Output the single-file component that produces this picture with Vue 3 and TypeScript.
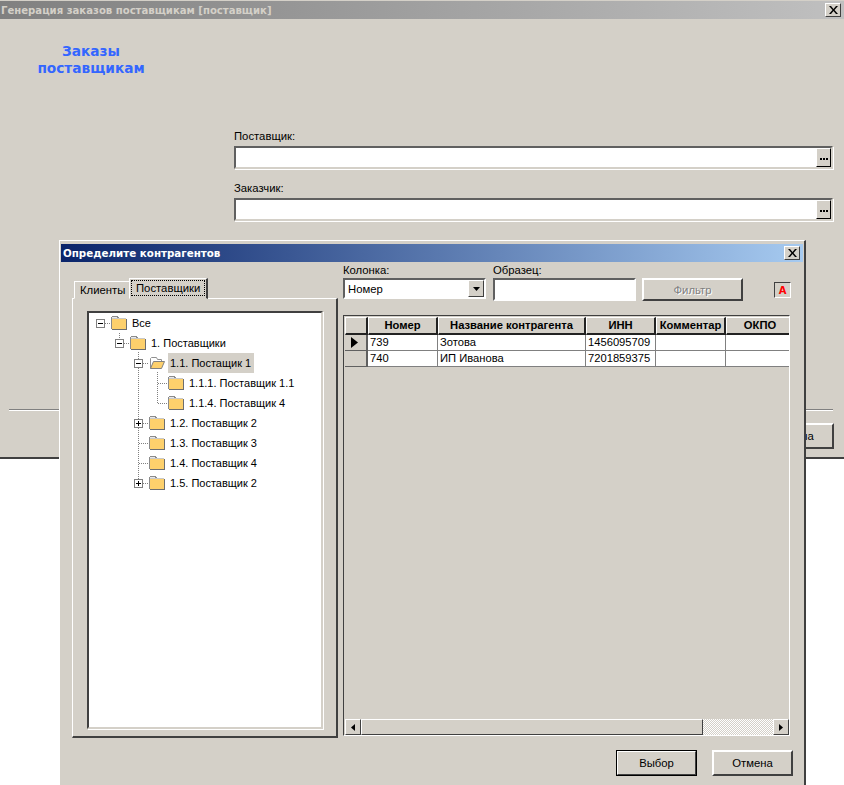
<script setup lang="ts">
interface TreeNode {
  label: string
  level: number
  toggle?: 'minus' | 'plus'
  open?: boolean
  selected?: boolean
}

const nodes: TreeNode[] = [
  { label: 'Все', level: 0, toggle: 'minus' },
  { label: '1. Поставщики', level: 1, toggle: 'minus' },
  { label: '1.1. Постащик 1', level: 2, toggle: 'minus', open: true, selected: true },
  { label: '1.1.1. Поставщик 1.1', level: 3 },
  { label: '1.1.4. Поставщик 4', level: 3 },
  { label: '1.2. Поставщик 2', level: 2, toggle: 'plus' },
  { label: '1.3. Поставщик 3', level: 2 },
  { label: '1.4. Поставщик 4', level: 2 },
  { label: '1.5. Поставщик 2', level: 2, toggle: 'plus' }
]

const columns = [
  { title: 'Номер', width: 70 },
  { title: 'Название контрагента', width: 148 },
  { title: 'ИНН', width: 70 },
  { title: 'Комментар', width: 70 },
  { title: 'ОКПО', width: 69 }
]

const rows = [
  ['739', 'Зотова', '1456095709', '', ''],
  ['740', 'ИП Иванова', '7201859375', '', '']
]
</script>

<template>
  <div class="desktop">
    <section class="main-window">
      <header class="main-title">
        <span>Генерация заказов поставщикам [поставщик]</span>
        <button class="cap-btn" aria-label="Закрыть">
          <svg width="9" height="8" viewBox="0 0 9 8"><path d="M0 0h2l2.500 3 2.500-3h2l-3.500 4 3.500 4h-2l-2.500-3-2.500 3h-2l3.500-4z" fill="#000" /></svg>
        </button>
      </header>
      <div class="main-body">
        <h1 class="brand">Заказы<br />поставщикам</h1>
        <div class="fields">
          <label class="f-label">Поставщик:</label>
          <div class="lookup">
            <button class="dots" aria-label="Выбрать">
              <svg width="9" height="3" viewBox="0 0 9 3"><path d="M0 0h2v2H0zM3 0h2v2H3zM6 0h2v2H6z" fill="#000" /></svg>
            </button>
          </div>
          <label class="f-label second">Заказчик:</label>
          <div class="lookup">
            <button class="dots" aria-label="Выбрать">
              <svg width="9" height="3" viewBox="0 0 9 3"><path d="M0 0h2v2H0zM3 0h2v2H3zM6 0h2v2H6z" fill="#000" /></svg>
            </button>
          </div>
        </div>
      </div>
      <div class="main-foot">
        <hr class="rule" />
        <div class="foot-row"><button class="btn foot-btn">Отмена</button></div>
      </div>
    </section>

    <section class="dialog">
      <header class="dlg-title">
        <span>Определите контрагентов</span>
        <button class="cap-btn" aria-label="Закрыть">
          <svg width="9" height="8" viewBox="0 0 9 8"><path d="M0 0h2l2.500 3 2.500-3h2l-3.500 4 3.500 4h-2l-2.500-3-2.500 3h-2l3.500-4z" fill="#000" /></svg>
        </button>
      </header>
      <div class="dlg-body">
        <div class="left">
          <div class="tabs">
            <div class="tab">Клиенты</div>
            <div class="tab active"><span>Поставщики</span></div>
          </div>
          <div class="tab-panel">
            <div class="tree">
              <svg class="tree-lines" width="231" height="180" viewBox="0 0 231 180">
                <g stroke="#808080" stroke-dasharray="1 1" fill="none" shape-rendering="crispEdges">
                  <path d="M16 10.500H21" />
                  <path d="M30.500 20V25M35 30.500H40" />
                  <path d="M49.500 39V170M54 50.500H59" />
                  <path d="M68.500 59V90.500M68.500 70.500H78M68.500 90.500H78" />
                  <path d="M54 110.500H59M49.500 130.500H59M49.500 150.500H59M54 170.500H59" />
                </g>
              </svg>
              <div
                v-for="n in nodes"
                :key="n.label"
                class="node"
                :class="'lvl-' + n.level"
              >
                <span class="toggle-slot">
                  <svg v-if="n.toggle" width="9" height="9" viewBox="0 0 9 9" shape-rendering="crispEdges">
                    <rect x="0.500" y="0.500" width="8" height="8" fill="#fff" stroke="#808080" />
                    <path d="M2 4.500H7" stroke="#000" />
                    <path v-if="n.toggle === 'plus'" d="M4.500 2V7" stroke="#000" />
                  </svg>
                </span>
                <svg v-if="n.open" class="folder" width="16" height="14" viewBox="0 0 16 14">
                  <path d="M1.500 12.500V2.500L2.500 1.500H7.500L8.500 3.500H12.500V5" fill="#fff" stroke="#909090" />
                  <path d="M1.500 12.500L4.500 5.500H15.500L12.500 12.500Z" fill="#fdd06c" stroke="#808080" />
                </svg>
                <svg v-else class="folder" width="16" height="14" viewBox="0 0 16 14" shape-rendering="crispEdges">
                  <path d="M0.500 13V1.500L1.500 0.500H6.500L7.500 2.500H14.500" fill="#e8e8e8" stroke="#8a8a8a" />
                  <rect x="1" y="3" width="14" height="10" fill="#fdd06c" />
                  <path d="M0.500 2.500H14.500" stroke="#c8c8c8" />
                  <path d="M15 3V13.500H1" fill="none" stroke="#6e6e6e" />
                </svg>
                <span class="node-label" :class="{ selected: n.selected }">{{ n.label }}</span>
              </div>
            </div>
          </div>
        </div>

        <div class="right">
          <div class="filters">
            <div class="filter f-col">
              <label>Колонка:</label>
              <div class="select">
                <span>Номер</span>
                <button class="drop" aria-label="Открыть"><svg width="7" height="4" viewBox="0 0 7 4"><path d="M0 0h7L3.500 4z" fill="#000" /></svg></button>
              </div>
            </div>
            <div class="filter f-sample">
              <label>Образец:</label>
              <div class="text-in"></div>
            </div>
            <button class="btn filter-btn">Фильтр</button>
            <div class="a-btn"><span>A</span></div>
          </div>

          <div class="grid-box">
            <div class="grid-inner">
              <div class="g-row g-head">
                <div class="g-ind head-cell"></div>
                <div v-for="c in columns" :key="c.title" class="head-cell" :style="{ width: c.width + 'px' }">{{ c.title }}</div>
              </div>
              <div v-for="(r, i) in rows" :key="i" class="g-row g-data">
                <div class="g-ind data-ind">
                  <svg v-if="i === 0" width="7" height="11" viewBox="0 0 7 11"><path d="M0 0l7 5.500-7 5.500z" fill="#000" /></svg>
                </div>
                <div v-for="(v, j) in r" :key="j" class="data-cell" :style="{ width: columns[j].width + 'px' }">{{ v }}</div>
              </div>
            </div>
            <div class="hscroll">
              <button class="sb-btn" aria-label="Влево"><svg width="4" height="7" viewBox="0 0 4 7"><path d="M4 0v7L0 3.500z" fill="#000" /></svg></button>
              <div class="sb-thumb"></div>
              <div class="sb-track"></div>
              <button class="sb-btn" aria-label="Вправо"><svg width="4" height="7" viewBox="0 0 4 7"><path d="M0 0v7l4-3.500z" fill="#000" /></svg></button>
            </div>
          </div>

          <div class="actions">
            <button class="btn default">Выбор</button>
            <button class="btn">Отмена</button>
          </div>
        </div>
      </div>
    </section>
  </div>
</template>

<style>
html, body { margin: 0; background: #fff; }
</style>

<style scoped>
* { box-sizing: border-box; }
.desktop {
  position: relative;
  width: 844px;
  height: 785px;
  overflow: hidden;
  background: #fff;
  font-family: "Liberation Sans", Arial, sans-serif;
  font-size: 11px;
  color: #000;
}
button { font: inherit; color: inherit; padding: 0; margin: 0; }
.main-window {
  height: 459px;
  background: #d4d0c8;
  border-top: 1px solid #d4d0c8;
  border-bottom: 2px solid #404040;
  display: flex;
  flex-direction: column;
}
.main-title {
  height: 18px;
  background: linear-gradient(90deg, #808080, #c0c0c0);
  display: flex;
  align-items: center;
  justify-content: space-between;
  padding: 0 3px 0 1px;
  font-family: "DejaVu Sans", sans-serif;
  font-weight: 700;
  font-size: 10.100px;
  color: #d4d0c8;
}
.cap-btn {
  width: 16px;
  height: 14px;
  background: #d4d0c8;
  border: 1px solid;
  border-color: #fff #404040 #404040 #fff;
  display: flex;
  align-items: center;
  justify-content: center;
}
.main-body { flex: 1; position: relative; min-height: 0; display: flex; }
.brand {
  width: 182px;
  margin: 24px 0 0;
  text-align: center;
  font-family: "DejaVu Sans", sans-serif;
  font-size: 13.700px;
  line-height: 17px;
  font-weight: 700;
  color: #3366ff;
}
.fields {
  margin: 110px 0 0 52px;
  width: 599px;
  display: flex;
  flex-direction: column;
}
.f-label { height: 17px; line-height: 14px; font-size: 11.300px; }
.f-label.second { margin-top: 12px; height: 17px; }
.lookup {
  height: 23px;
  background: #fff;
  border: 2px solid;
  border-color: #606060 #d4d0c8 #d4d0c8 #606060;
  box-shadow: 1px 1px 0 #fff;
  display: flex;
  justify-content: flex-end;
}
.dots {
  width: 15px;
  height: 19px;
  background: #d4d0c8;
  border: 1px solid;
  border-color: #fff #000 #000 #fff;
  display: flex;
  align-items: center;
  justify-content: center;
  padding-top: 3px;
}
.dots svg { display: block; margin-left: 1px; }
.main-foot { height: 48px; }
.rule {
  margin: 0 11px 0 9px;
  height: 2px;
  border: 0;
  border-top: 1px solid #808080;
  border-bottom: 1px solid #fff;
}
.foot-row { display: flex; justify-content: flex-end; padding: 12px 10px 0 0; }
.foot-btn { width: 80px; height: 23px; }

.btn {
  width: 81px;
  height: 26px;
  background: #d4d0c8;
  border: 2px solid;
  border-color: #fff #404040 #404040 #fff;
  font-family: "Liberation Sans", Arial, sans-serif;
  font-size: 11.300px;
}
.btn.default { outline: 1px solid #000; outline-offset: -1px; }

.dialog {
  position: absolute;
  left: 59px;
  top: 240px;
  width: 747px;
  height: 560px;
  background: #d4d0c8;
  border-left: 1px solid #fff;
  border-top: 1px solid #fff;
  border-right: 2px solid #404040;
  padding: 3px 1px 0 1px;
  display: flex;
  flex-direction: column;
}
.dlg-title {
  height: 18px;
  background: linear-gradient(90deg, #0a246a, #a6caf0);
  color: #fff;
  display: flex;
  align-items: center;
  justify-content: space-between;
  padding: 0 3px 0 2px;
  font-family: "DejaVu Sans", sans-serif;
  font-weight: 700;
  font-size: 10.300px;
}
.dlg-body { display: flex; flex: 1; min-height: 0; }

.left { width: 277px; flex: none; padding: 17px 0 0 11px; display: flex; flex-direction: column; }
.tabs { display: flex; align-items: flex-end; height: 20px; padding-left: 2px; position: relative; z-index: 1; margin-bottom: -1px; }
.tab {
  width: 56px;
  height: 18px;
  background: #d4d0c8;
  border: 1px solid;
  border-color: #fff #404040 transparent #fff;
  border-right: 0;
  padding-left: 5px;
  line-height: 17px;
  font-size: 11.300px;
}
.tab.active {
  width: 79px;
  height: 21px;
  margin-left: -1px;
  border: 1px solid;
  border-right: 2px solid #404040;
  border-color: #fff #404040 #d4d0c8 #fff;
  padding: 1px;
  line-height: 14px;
}
.tab.active span {
  display: block;
  height: 16px;
  outline: 1px dotted #000;
  outline-offset: -1px;
  padding-left: 5px;
  line-height: 17px;
}
.tab-panel {
  width: 266px;
  height: 440px;
  border: 1px solid;
  border-width: 1px 2px 2px 1px;
  border-color: #fff #404040 #404040 #fff;
  padding: 12px 0 0 14px;
}
.tree {
  position: relative;
  width: 236px;
  height: 418px;
  background: #fff;
  border: 2px solid;
  border-color: #404040 #d4d0c8 #d4d0c8 #404040;
  box-shadow: 1px 1px 0 #fff;
}
.tree-lines { position: absolute; left: 0; top: 0; }
.node { position: relative; height: 20px; display: flex; align-items: center; }
.lvl-0 { padding-left: 7px; }
.lvl-1 { padding-left: 26px; }
.lvl-2 { padding-left: 45px; }
.lvl-3 { padding-left: 64px; }
.toggle-slot { width: 15px; height: 9px; display: block; flex: none; }
.toggle-slot svg { display: block; }
.folder { flex: none; display: block; margin-top: -1px; }
.node-label {
  margin-left: 3px;
  padding: 0 3px 0 2px;
  height: 20px;
  line-height: 20px;
  white-space: nowrap;
  font-size: 11px;
}
.node-label.selected { background: #d4d0c8; }

.right { flex: 1; display: flex; flex-direction: column; padding-left: 5px; min-width: 0; }
.filters { display: flex; align-items: flex-start; height: 53px; padding-top: 1px; position: relative; }
.filter label { display: block; height: 15px; line-height: 14px; font-size: 11.300px; }
.f-col { width: 150px; }
.f-sample { width: 149px; }
.select {
  width: 143px;
  height: 21px;
  background: #fff;
  border: 2px solid;
  border-color: #606060 #fff #fff #606060;
  display: flex;
  align-items: center;
  justify-content: space-between;
  padding-left: 3px;
  font-size: 11.300px;
}
.drop {
  width: 16px;
  height: 17px;
  background: #d4d0c8;
  border: 1px solid;
  border-color: #fff #404040 #404040 #fff;
  display: flex;
  align-items: center;
  justify-content: center;
}
.text-in {
  width: 143px;
  height: 23px;
  background: #fff;
  border: 2px solid;
  border-color: #606060 #fff #fff #606060;
}
.filter-btn { width: 101px; height: 23px; margin-top: 15px; color: #808080; text-shadow: 1px 1px 0 #fff; }
.a-btn {
  width: 17px;
  height: 16px;
  margin: 19px 0 0 31px;
  background: #d4d0c8;
  border: 1px solid;
  border-color: #404040 #fff #fff #404040;
  display: flex;
  align-items: center;
  justify-content: center;
  font-family: "DejaVu Sans", sans-serif;
  font-weight: 700;
  font-size: 10px;
  color: #f00;
}
.grid-box {
  width: 447px;
  height: 421px;
  border: 1px solid;
  border-color: #404040 #fff #fff #404040;
  padding: 1px 0 0 1px;
  display: flex;
  flex-direction: column;
}
.grid-inner { flex: 1; min-height: 0; overflow: hidden; }
.g-row { display: flex; }
.g-head { height: 18px; }
.g-data { height: 16px; }
.g-ind { width: 23px; flex: none; }
.head-cell {
  flex: none;
  background: #d4d0c8;
  border: 1px solid;
  border-width: 1px 2px 2px 1px;
  border-color: #fff #222 #222 #fff;
  text-align: center;
  font-weight: 700;
  font-size: 11.200px;
  line-height: 15px;
  white-space: nowrap;
  overflow: hidden;
}
.data-ind {
  background: #d4d0c8;
  border: 1px solid;
  border-width: 0 2px 1px 0;
  border-color: #606060;
  padding: 2px 0 0 6px;
}
.data-ind svg { display: block; }
.data-cell {
  flex: none;
  background: #fff;
  border-right: 1px solid #808080;
  border-bottom: 1px solid #808080;
  padding-left: 2px;
  font-size: 11.200px;
  line-height: 15px;
  white-space: nowrap;
}
.hscroll { height: 16px; display: flex; flex: none; }
.sb-btn {
  width: 16px;
  height: 16px;
  flex: none;
  background: #d4d0c8;
  border: 1px solid;
  border-color: #fff #404040 #404040 #fff;
  display: flex;
  align-items: center;
  justify-content: center;
}
.sb-thumb {
  width: 342px;
  background: #d4d0c8;
  border: 1px solid;
  border-color: #fff #404040 #404040 #fff;
}
.sb-track {
  flex: 1;
  background-color: #eae8e4;
  background-image: repeating-conic-gradient(#d4d0c8 0 25%, #fff 0 50%);
  background-size: 2px 2px;
}
.actions { display: flex; gap: 15px; padding: 14px 0 0 273px; }
</style>
